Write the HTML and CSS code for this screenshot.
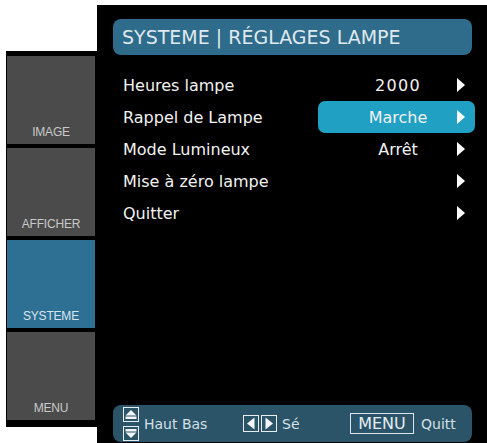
FILE: index.html
```html
<!DOCTYPE html>
<html>
<head>
<meta charset="utf-8">
<link rel="stylesheet" href="styles.css">
</head>
<body>
<div class="screen">
  <div class="sidebar">
    <div class="tile"><span>IMAGE</span></div>
    <div class="tile"><span>AFFICHER</span></div>
    <div class="tile active"><span>SYSTEME</span></div>
    <div class="tile"><span>MENU</span></div>
  </div>
  <div class="panel">
    <div class="header">SYSTEME | RÉGLAGES LAMPE</div>
    <div class="menu">
      <div class="row">
        <span class="label">Heures lampe</span>
        <span class="opt"><span class="val num">2000</span><svg class="arrow" viewBox="0 0 8 14"><polygon points="0,0 8,7 0,14" fill="#fff"/></svg></span>
      </div>
      <div class="row">
        <span class="label">Rappel de Lampe</span>
        <span class="opt sel"><span class="val">Marche</span><svg class="arrow" viewBox="0 0 8 14"><polygon points="0,0 8,7 0,14" fill="#fff"/></svg></span>
      </div>
      <div class="row">
        <span class="label">Mode Lumineux</span>
        <span class="opt"><span class="val">Arrêt</span><svg class="arrow" viewBox="0 0 8 14"><polygon points="0,0 8,7 0,14" fill="#fff"/></svg></span>
      </div>
      <div class="row">
        <span class="label">Mise à zéro lampe</span>
        <span class="opt"><span class="val"></span><svg class="arrow" viewBox="0 0 8 14"><polygon points="0,0 8,7 0,14" fill="#fff"/></svg></span>
      </div>
      <div class="row">
        <span class="label">Quitter</span>
        <span class="opt"><span class="val"></span><svg class="arrow" viewBox="0 0 8 14"><polygon points="0,0 8,7 0,14" fill="#fff"/></svg></span>
      </div>
    </div>
    <div class="footer">
      <div class="group g1">
        <svg class="updown" viewBox="0 0 16 34">
          <rect x="0.5" y="0.5" width="15" height="14" fill="none" stroke="#e6eef2" stroke-width="1"/>
          <polygon points="2.5,8.5 8,3 13.5,8.5" fill="#f2f6f8"/>
          <rect x="2.5" y="9.5" width="11" height="2.5" fill="#f2f6f8"/>
          <rect x="0.5" y="19.5" width="15" height="14" fill="none" stroke="#e6eef2" stroke-width="1"/>
          <rect x="2.5" y="22" width="11" height="2.5" fill="#f2f6f8"/>
          <polygon points="2.5,25.5 8,31 13.5,25.5" fill="#f2f6f8"/>
        </svg>
        <span class="ftext">Haut Bas</span>
      </div>
      <div class="group g2">
        <svg class="leftright" viewBox="0 0 34 17">
          <rect x="0.5" y="0.5" width="15" height="16" fill="none" stroke="#e6eef2" stroke-width="1"/>
          <polygon points="11.5,2.5 4,8.5 11.5,14.5" fill="#f2f6f8"/>
          <rect x="18.5" y="0.5" width="15" height="16" fill="none" stroke="#e6eef2" stroke-width="1"/>
          <polygon points="22.5,2.5 30,8.5 22.5,14.5" fill="#f2f6f8"/>
        </svg>
        <span class="ftext">Sé</span>
      </div>
      <div class="group g3">
        <span class="menukey">MENU</span>
        <span class="ftext">Quitt</span>
      </div>
    </div>
  </div>
</div>
</body>
</html>
```

FILE: styles.css
```css
* { box-sizing: border-box; }
html, body {
  margin: 0;
  padding: 0;
  background: #ffffff;
  width: 487px;
  height: 443px;
  overflow: hidden;
}
.screen {
  display: flex;
  align-items: flex-start;
  padding-left: 6px;
  font-family: "DejaVu Sans", Verdana, sans-serif;
}
.sidebar {
  margin-top: 51px;
  width: 91px;
  height: 376px;
  background: #000;
  padding: 5px 2px 7px 1px;
  display: flex;
  flex-direction: column;
  gap: 4px;
}
.tile {
  height: 88px;
  background: #4b4b4b;
  display: flex;
  align-items: flex-end;
  justify-content: center;
  padding-bottom: 5px;
  font-family: "Liberation Sans", Arial, sans-serif;
  font-size: 12px;
  color: #c9c9c9;
  letter-spacing: -0.2px;
}
.tile.active {
  background: #2e6f94;
  color: #d8e6ee;
}
.panel {
  margin-top: 5px;
  width: 390px;
  height: 438px;
  background: #000;
  padding: 14px 0 0 16px;
  display: flex;
  flex-direction: column;
}
.header {
  width: 359px;
  height: 36px;
  border-radius: 8px;
  background: #2f6b8a;
  padding-left: 9px;
  font-size: 19px;
  line-height: 36px;
  color: #dfe9ef;
  white-space: nowrap;
}
.menu {
  margin-top: 14px;
  display: flex;
  flex-direction: column;
}
.row {
  display: flex;
  align-items: center;
  width: 362px;
  height: 32px;
  padding-left: 10px;
  font-size: 16px;
  color: #f2f2f2;
}
.label {
  flex: 1;
  white-space: nowrap;
}
.opt {
  width: 157px;
  height: 32px;
  display: flex;
  align-items: center;
  padding: 0 10px 0 30px;
  border-radius: 7px;
}
.opt.sel {
  background: #20a0c2;
}
.val {
  width: 100px;
  text-align: center;
  white-space: nowrap;
}
.val.num {
  letter-spacing: 1.3px;
}
.arrow {
  margin-left: 9px;
  width: 8px;
  height: 14px;
}
.footer {
  margin-top: auto;
  margin-bottom: 1px;
  width: 359px;
  height: 37px;
  border-radius: 8px;
  background: #2c5468;
  padding-left: 10px;
  display: flex;
  align-items: center;
  color: #d3e0e7;
  font-size: 14px;
}
.group {
  display: flex;
  align-items: center;
}
.g1 { width: 120px; }
.g2 { width: 107px; }
.updown {
  width: 16px;
  height: 34px;
}
.g1 .ftext { margin-left: 5px; }
.leftright {
  width: 34px;
  height: 17px;
}
.g2 .ftext { margin-left: 5px; }
.menukey {
  width: 64px;
  height: 21px;
  border: 1px solid #dbe6ec;
  font-size: 16px;
  line-height: 19px;
  text-align: center;
  color: #e4edf2;
}
.g3 .ftext { margin-left: 7px; }
```
